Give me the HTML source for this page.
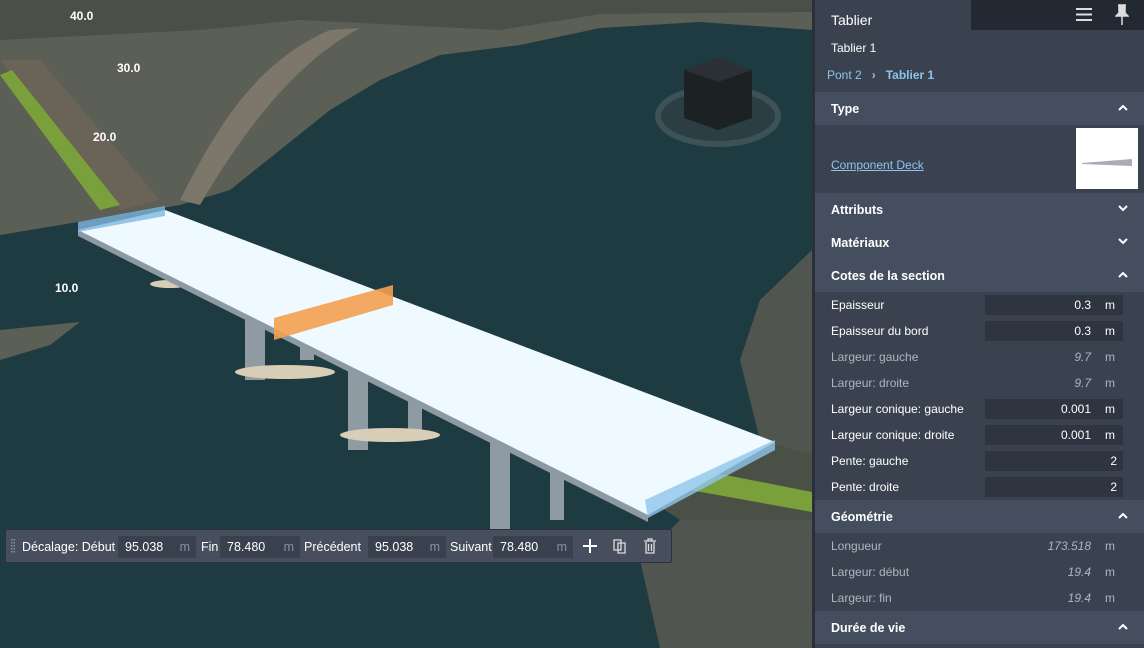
<!DOCTYPE html>
<html><head><meta charset="utf-8"><style>
*{margin:0;padding:0;box-sizing:border-box}
body{width:1144px;height:648px;overflow:hidden;background:#1f3d44;font-family:"Liberation Sans",sans-serif;font-size:12px;position:relative}
#scene{position:absolute;left:0;top:0}
#panel{position:absolute;left:812px;top:0;width:332px;height:648px;background:#3a4250;border-left:3px solid #2a303a;color:#fff}
.topbar{position:absolute;left:156px;top:0;width:176px;height:30px;background:#232932}
.t{position:absolute;left:16px}
.hdr{position:absolute;left:0;width:329px;height:33px;background:#454e5f;font-weight:bold;font-size:12.5px;padding:10px 0 0 16px}
.hdr svg{position:absolute;right:16px;top:12px}
.row{position:absolute;left:16px;width:300px;height:20px;font-size:12px;line-height:20px}
.row .v{position:absolute;top:0;left:154px;width:138px;height:20px;background:#2e3440;text-align:right;padding-right:32px}
.row .v.nb{background:none;font-style:italic;color:#aeb5c0}
.row .u{position:absolute;top:0;left:274px}
.dim{color:#aeb5c0}
#tb{position:absolute;left:5px;top:529px;width:667px;height:34px;background:#474f5e;border:1px solid #2c323c;border-radius:2px;color:#fff;font-size:12.5px}
#tb span{position:absolute;top:10px}
#tb .in{position:absolute;top:6px;height:22px;background:#3a414e;padding:4px 0 0 7px}
#tb .in i{position:absolute;right:6px;top:4px;color:#8a919c;font-style:normal}
#tb svg{position:absolute}
</style></head><body>
<svg id="scene" width="812" height="648" viewBox="0 0 812 648">
<rect width="812" height="648" fill="#1e3b42"/>
<polygon points="0,0 812,0 812,30 700,22 600,28 520,45 440,55 380,80 330,110 280,150 230,190 180,205 120,215 60,225 0,235" fill="#5b5f55"/>
<polygon points="0,0 812,0 812,12 600,14 500,30 300,20 200,30 0,40" fill="#4a5048"/>
<polygon points="0,60 40,60 160,200 120,210" fill="#6a6458"/>
<polygon points="0,75 12,70 120,205 100,210" fill="#7aa03c"/>
<path d="M180,200 C220,120 260,60 330,30 L360,28 C300,60 250,120 200,205Z" fill="#7d766a"/>
<polygon points="0,330 80,322 50,345 0,360" fill="#5b5f55"/>
<polygon points="812,250 760,300 740,360 760,440 690,510 640,560 660,648 812,648" fill="#50564f"/>
<polygon points="760,440 812,455 812,520 680,520 650,500" fill="#4b5046"/>
<polygon points="700,470 812,492 812,512 690,490" fill="#7aa03c"/>
<ellipse cx="718" cy="116" rx="60" ry="28" fill="#2a3e43" stroke="#3d5257" stroke-width="6"/>
<polygon points="684,70 718,58 752,70 752,118 718,130 684,118" fill="#1c2124"/>
<polygon points="684,70 718,82 752,70 718,58" fill="#2a3034"/>
<g fill="#8e9ba3">
<rect x="245" y="310" width="20" height="70"/><rect x="300" y="330" width="14" height="30"/>
<rect x="348" y="365" width="20" height="85"/><rect x="408" y="390" width="14" height="40"/>
<rect x="490" y="440" width="20" height="95"/><rect x="550" y="465" width="14" height="55"/>
</g>
<g fill="#d8cdb6"><ellipse cx="285" cy="372" rx="50" ry="7"/><ellipse cx="390" cy="435" rx="50" ry="7"/><ellipse cx="170" cy="284" rx="20" ry="4"/></g>
<polygon points="78,230 165,210 775,442 648,515 648,522 78,236" fill="#8d9aa4"/>
<polygon points="78,230 165,210 775,442 648,515" fill="#eefaff"/>
<polygon points="78,222 165,206 165,216 78,232" fill="#7fb8e0" opacity=".8"/>
<polygon points="645,500 775,440 775,450 648,518" fill="#8fc6ea" opacity=".8"/>
<polygon points="274,318 393,285 393,305 274,340" fill="#f3a050" opacity=".9"/>
<g fill="#fff" font-family="Liberation Sans" font-size="12" font-weight="bold">
<text x="70" y="20">40.0</text><text x="117" y="72">30.0</text><text x="93" y="141">20.0</text><text x="55" y="292">10.0</text></g>
</svg>
<div id="tb">
<svg style="left:5px;top:9px" width="4" height="16"><g fill="#8a919c"><rect x="0" y="0" width="1.5" height="1.5"/><rect x="0" y="3" width="1.5" height="1.5"/><rect x="0" y="6" width="1.5" height="1.5"/><rect x="0" y="9" width="1.5" height="1.5"/><rect x="0" y="12" width="1.5" height="1.5"/><rect x="2.5" y="0" width="1.5" height="1.5"/><rect x="2.5" y="3" width="1.5" height="1.5"/><rect x="2.5" y="6" width="1.5" height="1.5"/><rect x="2.5" y="9" width="1.5" height="1.5"/><rect x="2.5" y="12" width="1.5" height="1.5"/></g></svg>
<span style="left:16px">Décalage: Début</span>
<div class="in" style="left:112px;width:78px">95.038<i>m</i></div>
<span style="left:195px">Fin</span>
<div class="in" style="left:214px;width:80px">78.480<i>m</i></div>
<span style="left:298px">Précédent</span>
<div class="in" style="left:362px;width:78px">95.038<i>m</i></div>
<span style="left:444px">Suivant</span>
<div class="in" style="left:487px;width:80px">78.480<i>m</i></div>
<svg style="left:577px;top:9px" width="14" height="14"><path d="M7 0V14M0 7H14" stroke="#fff" stroke-width="2"/></svg>
<svg style="left:607px;top:9px" width="14" height="15"><path d="M1 1H8V11H1Z M5 4H12V14H5Z" fill="none" stroke="#ddd" stroke-width="1.3"/></svg>
<svg style="left:637px;top:8px" width="14" height="16"><path d="M1 3H13M5 3V1H9V3M3 4V15H11V4M5.5 6V13M8.5 6V13" fill="none" stroke="#ddd" stroke-width="1.3"/></svg>
</div>
<div id="panel">
<div class="topbar">
<svg style="position:absolute;left:105px;top:7px" width="16" height="15"><path d="M0 2H16M0 7.5H16M0 13H16" stroke="#ddd" stroke-width="2"/></svg>
<svg style="position:absolute;left:144px;top:4px" width="14" height="22"><path d="M3 1H11M4 1V9L1 12H13L10 9V1M7 12V21" fill="#ddd" stroke="#ddd" stroke-width="1.5"/></svg>
</div>
<div class="t" style="top:12px;font-size:14px">Tablier</div>
<div class="t" style="top:41px">Tablier 1</div>
<div class="t" style="top:68px;left:12px;color:#8cc4ee">Pont 2 &nbsp;&nbsp;<b>›</b>&nbsp;&nbsp; <b>Tablier 1</b></div>
<div class="hdr" style="top:92px">Type<svg width="10" height="7"><path d="M1 6L5 2L9 6" fill="none" stroke="#fff" stroke-width="2"/></svg></div>
<div class="t" style="top:158px;color:#8cc4ee;text-decoration:underline">Component Deck</div>
<div style="position:absolute;left:261px;top:128px;width:62px;height:61px;background:#fff"><svg width="62" height="61"><polygon points="6,35 56,31 56,38 6,36" fill="#aab"/></svg></div>
<div class="hdr" style="top:193px">Attributs<svg width="10" height="7"><path d="M1 1L5 5L9 1" fill="none" stroke="#fff" stroke-width="2"/></svg></div>
<div class="hdr" style="top:226px">Matériaux<svg width="10" height="7"><path d="M1 1L5 5L9 1" fill="none" stroke="#fff" stroke-width="2"/></svg></div>
<div class="hdr" style="top:259px">Cotes de la section<svg width="10" height="7"><path d="M1 6L5 2L9 6" fill="none" stroke="#fff" stroke-width="2"/></svg></div>
<div class="row" style="top:295px">Epaisseur<div class="v">0.3</div><span class="u">m</span></div>
<div class="row" style="top:321px">Epaisseur du bord<div class="v">0.3</div><span class="u">m</span></div>
<div class="row dim" style="top:347px">Largeur: gauche<div class="v nb">9.7</div><span class="u">m</span></div>
<div class="row dim" style="top:373px">Largeur: droite<div class="v nb">9.7</div><span class="u">m</span></div>
<div class="row" style="top:399px">Largeur conique: gauche<div class="v">0.001</div><span class="u">m</span></div>
<div class="row" style="top:425px">Largeur conique: droite<div class="v">0.001</div><span class="u">m</span></div>
<div class="row" style="top:451px">Pente: gauche<div class="v" style="padding-right:6px">2</div></div>
<div class="row" style="top:477px">Pente: droite<div class="v" style="padding-right:6px">2</div></div>
<div class="hdr" style="top:500px">Géométrie<svg width="10" height="7"><path d="M1 6L5 2L9 6" fill="none" stroke="#fff" stroke-width="2"/></svg></div>
<div class="row dim" style="top:536px">Longueur<div class="v nb">173.518</div><span class="u">m</span></div>
<div class="row dim" style="top:562px">Largeur: début<div class="v nb">19.4</div><span class="u">m</span></div>
<div class="row dim" style="top:588px">Largeur: fin<div class="v nb">19.4</div><span class="u">m</span></div>
<div class="hdr" style="top:611px">Durée de vie<svg width="10" height="7"><path d="M1 6L5 2L9 6" fill="none" stroke="#fff" stroke-width="2"/></svg></div>
</div>
</body></html>
